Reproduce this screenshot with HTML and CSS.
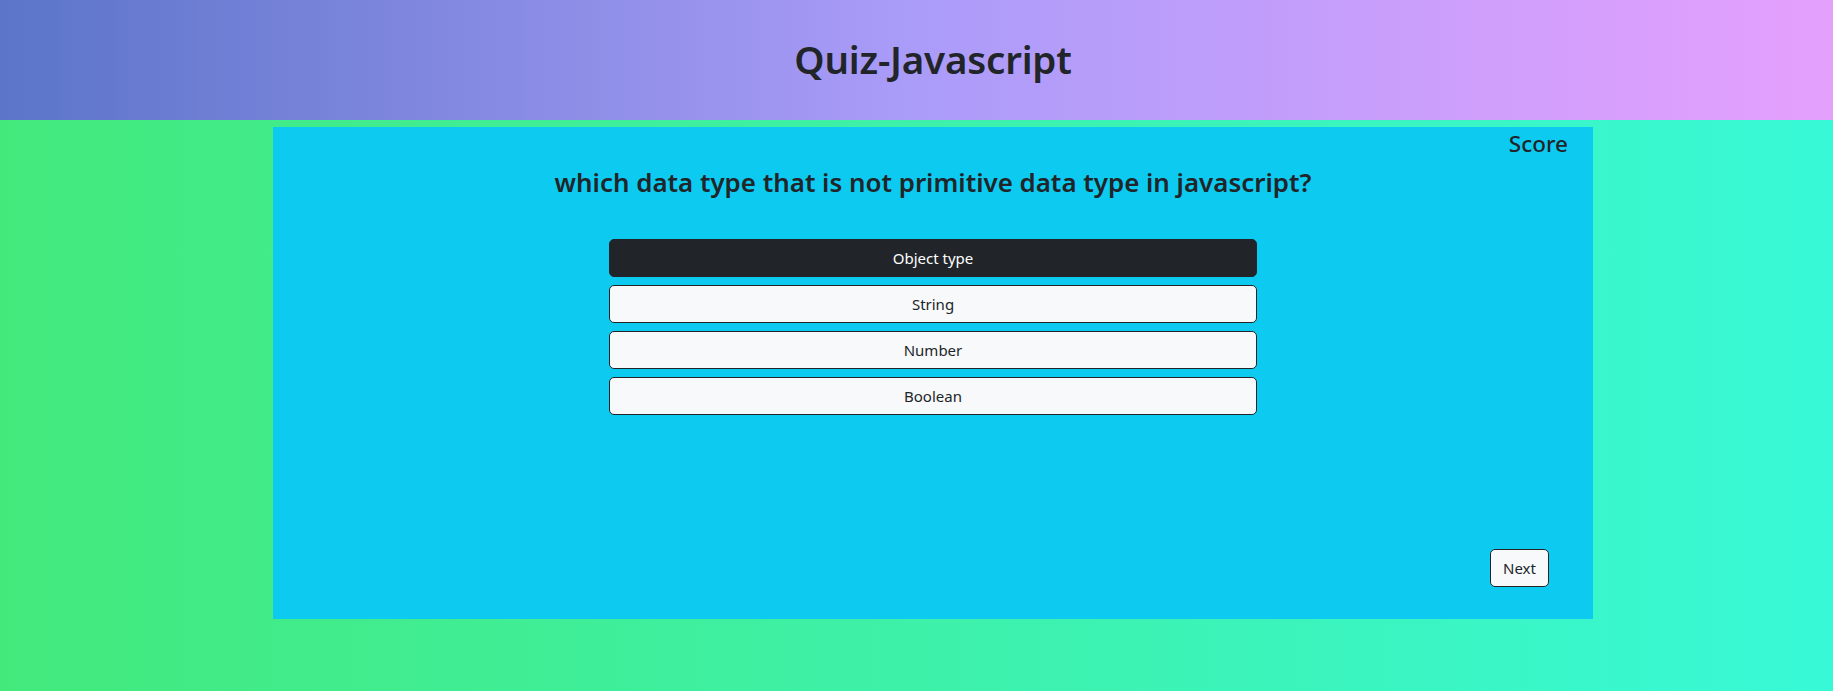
FILE: index.html
```html
<!DOCTYPE html>
<html lang="en">
<head>
<meta charset="utf-8">
<title>Quiz-Javascript</title>
<link rel="stylesheet" href="styles.css">
</head>
<body>
<header class="site-header">
  <div class="header-inner">
    <h1 class="title">Quiz-Javascript</h1>
  </div>
</header>
<main class="main">
  <section class="card">
    <div class="score-row"><h4 class="score">Score</h4></div>
    <h3 class="question">which data type that is not primitive data type in javascript?</h3>
    <div class="answers">
      <button class="btn btn-dark">Object type</button>
      <button class="btn btn-light">String</button>
      <button class="btn btn-light">Number</button>
      <button class="btn btn-light">Boolean</button>
    </div>
    <button class="btn btn-light btn-next">Next</button>
  </section>
</main>
</body>
</html>
```

FILE: styles.css
```css
* { box-sizing: border-box; }
html, body { margin: 0; padding: 0; }
body {
  min-height: 691px;
  font-family: "Noto Sans", "Open Sans", "Liberation Sans", sans-serif;
  color: #212529;
  background: linear-gradient(to right, #43e97b 0%, #38f9d7 100%);
}
.site-header {
  height: 120px;
  background: linear-gradient(to right, #5b75c8 0%, #ab9cf9 50%, #e5a0fd 100%);
}
.header-inner {
  width: 1320px;
  margin-left: 273px;
  height: 100%;
  display: flex;
  align-items: center;
  justify-content: center;
}
.title {
  margin: 0;
  font-size: 38.5px;
  font-weight: 600;
  line-height: 1.2;
  padding-bottom: 2px;
  letter-spacing: -0.2px;
}
.main {
  padding-top: 7px;
}
.card {
  width: 1320px;
  height: 492px;
  margin-left: 273px;
  background: #0dcaf0;
  display: flex;
  flex-direction: column;
}
.score-row {
  display: flex;
  justify-content: flex-end;
  padding: 3px 25px 0 0;
}
.score {
  margin: 0;
  font-size: 22.5px;
  font-weight: 500;
  line-height: 1.2;
}
.question {
  margin: 8px 0 0;
  text-align: center;
  font-size: 25.9px;
  font-weight: 600;
  line-height: 1.33;
}
.answers {
  width: 648px;
  margin: 40px auto 0;
  display: flex;
  flex-direction: column;
  gap: 8px;
}
.btn {
  font-family: inherit;
  font-size: 15px;
  line-height: 24px;
  padding: 6px 12px;
  height: 38px;
  border-radius: 5px;
  border: 1px solid #212529;
  cursor: pointer;
}
.btn-dark {
  background: #212529;
  color: #fff;
}
.btn-light {
  background: #f8f9fa;
  color: #212529;
}
.btn-next {
  margin-top: auto;
  margin-bottom: 32px;
  margin-right: 44px;
  align-self: flex-end;
  width: 59px;
  padding: 6px 0;
}
```
